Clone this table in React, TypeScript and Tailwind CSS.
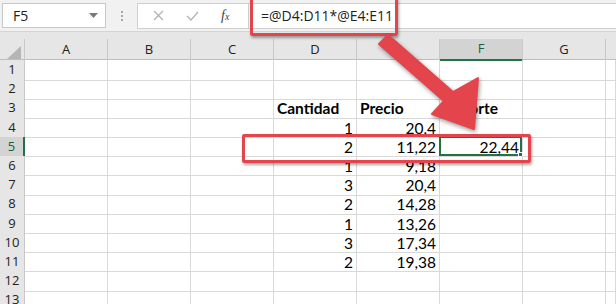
const cols = ['A', 'B', 'C', 'D', 'E', 'F', 'G']

// D, E, F values per row (1-based row number)
const data: Record<number, [string, string, string]> = {
  4: ['1', '20,4', ''],
  5: ['2', '11,22', '22,44'],
  6: ['1', '9,18', ''],
  7: ['3', '20,4', ''],
  8: ['2', '14,28', ''],
  9: ['1', '13,26', ''],
  10: ['3', '17,34', ''],
  11: ['2', '19,38', ''],
}

const rows = Array.from({ length: 13 }, (_, i) => i + 1)

const Cell = ({ text, bold, left, selected }: { text?: string; bold?: boolean; left?: boolean; selected?: boolean }) => (
  <div
    className={`relative h-full border-r border-b border-[#d9d9d9] flex items-end px-[3px] pb-[1px] text-[15.5px] leading-none text-black ${left ? 'justify-start' : 'justify-end'} ${bold ? 'font-bold' : ''}`}
  >
    {selected && (
      <div className="absolute -left-[1px] -top-[1px] -right-[0px] -bottom-[0px] border-2 border-[#217346]">
        <div className="absolute -right-[3px] -bottom-[3px] w-[5px] h-[5px] bg-[#217346] border border-white" />
      </div>
    )}
    <span className="relative">{text}</span>
  </div>
)

const App = () => {
  return (
    <div className="relative w-[616px] h-[304px] overflow-hidden bg-[#f1f1f1]" style={{ fontFamily: 'Lato, "Open Sans", sans-serif' }}>
      {/* formula bar */}
      <div className="h-[32px] flex items-center border-b border-[#d4d4d4]">
        <div className="ml-[2px] w-[104px] h-[25px] bg-white border border-[#c8c8c8] flex items-center justify-between pl-[10px] pr-[7px]">
          <span className="text-[14px] text-[#222]" style={{ fontFamily: '"Open Sans", sans-serif' }}>F5</span>
          <svg width="9" height="5" viewBox="0 0 9 5"><path d="M0 0h9L4.5 5z" fill="#7a7a7a" /></svg>
        </div>
        <div className="w-[31px] flex flex-col items-center gap-[2px]">
          <span className="w-[2px] h-[2px] bg-[#a8a8a8]" />
          <span className="w-[2px] h-[2px] bg-[#a8a8a8]" />
          <span className="w-[2px] h-[2px] bg-[#a8a8a8]" />
        </div>
        <div className="w-[112px] h-[26px] bg-white border border-[#d0d0d0] flex items-center">
          <svg className="ml-[15px]" width="11" height="11" viewBox="0 0 11 11"><path d="M1 1l9 9M10 1l-9 9" stroke="#b3b3b3" strokeWidth="1.3" /></svg>
          <svg className="ml-[22px]" width="13" height="10" viewBox="0 0 13 10"><path d="M1 5l4 4 7-8" stroke="#b3b3b3" strokeWidth="1.3" fill="none" /></svg>
          <span className="ml-[22px] text-[14px] italic text-[#444]" style={{ fontFamily: '"Liberation Serif", serif' }}>
            f<span className="text-[10px]">x</span>
          </span>
        </div>
        <div className="flex-1 h-[26px] bg-white border-y border-[#d0d0d0] flex items-center pl-[12px]">
          <span className="text-[14px] text-[#222]" style={{ fontFamily: '"Open Sans", sans-serif' }}>=@D4:D11*@E4:E11</span>
        </div>
      </div>

      {/* worksheet */}
      <div className="bg-[#e6e6e6] pt-[7px]">
        <div className="grid grid-cols-[25px_repeat(7,83px)_1fr] h-[21px] border-b border-[#bdbdbd]" style={{ fontFamily: '"Open Sans", sans-serif' }}>
          <div className="border-r border-[#c8c8c8] flex items-end justify-end pr-[3px] pb-[2px]">
            <svg width="14" height="13" viewBox="0 0 14 13"><path d="M14 0v13H0z" fill="#b5b5b5" /></svg>
          </div>
          {cols.map((c) => (
            <div
              key={c}
              className={`flex items-center justify-center text-[13px] border-r border-[#c8c8c8] ${c === 'F' ? 'bg-[#d3d3d3] border-b-2 border-b-[#217346] text-[#1d5e39]' : 'text-[#222]'}`}
            >
              {c}
            </div>
          ))}
          <div />
        </div>
        <div className="bg-white">
          {rows.map((r) => {
            const d = data[r]
            return (
              <div key={r} className="grid grid-cols-[25px_repeat(7,83px)_1fr] h-[19.2px]">
                <div
                  className={`flex items-center justify-center text-[13px] border-b border-[#c8c8c8] ${r === 5 ? 'bg-[#d3d3d3] border-r-2 border-r-[#217346] text-[#1d5e39]' : 'bg-[#e6e6e6] border-r border-[#bdbdbd] text-[#222]'}`}
                  style={{ fontFamily: '"Open Sans", sans-serif' }}
                >
                  {r}
                </div>
                <Cell />
                <Cell />
                <Cell />
                {r === 3 ? (
                  <>
                    <Cell text="Cantidad" bold left />
                    <Cell text="Precio" bold left />
                    <Cell text="Importe" bold left />
                  </>
                ) : (
                  <>
                    <Cell text={d?.[0]} />
                    <Cell text={d?.[1]} />
                    <Cell text={d?.[2]} selected={r === 5} />
                  </>
                )}
                <Cell />
                <Cell />
              </div>
            )
          })}
        </div>
      </div>

      {/* callouts */}
      <div className="absolute left-[250px] -top-[3px] w-[148px] h-[39px] border-[3px] border-[#e4444b] rounded-[2px] shadow-[1px_2px_3px_rgba(0,0,0,0.35)]" />
      <div className="absolute left-[242px] top-[134px] w-[289px] h-[29px] border-[3px] border-[#e4444b] rounded-[2px] shadow-[1px_2px_3px_rgba(0,0,0,0.35)]" />
      <svg className="absolute left-0 top-0 pointer-events-none" width="616" height="304" viewBox="0 0 616 304" style={{ filter: 'drop-shadow(1px 2px 2px rgba(0,0,0,0.4))' }}>
        <path d="M379 44 L388 35 L453 92 L478 78 L474 129 L432 114 L444 101 Z" fill="#e4444b" strokeLinejoin="round" stroke="#e4444b" strokeWidth="2" />
      </svg>
    </div>
  )
}

export default App
